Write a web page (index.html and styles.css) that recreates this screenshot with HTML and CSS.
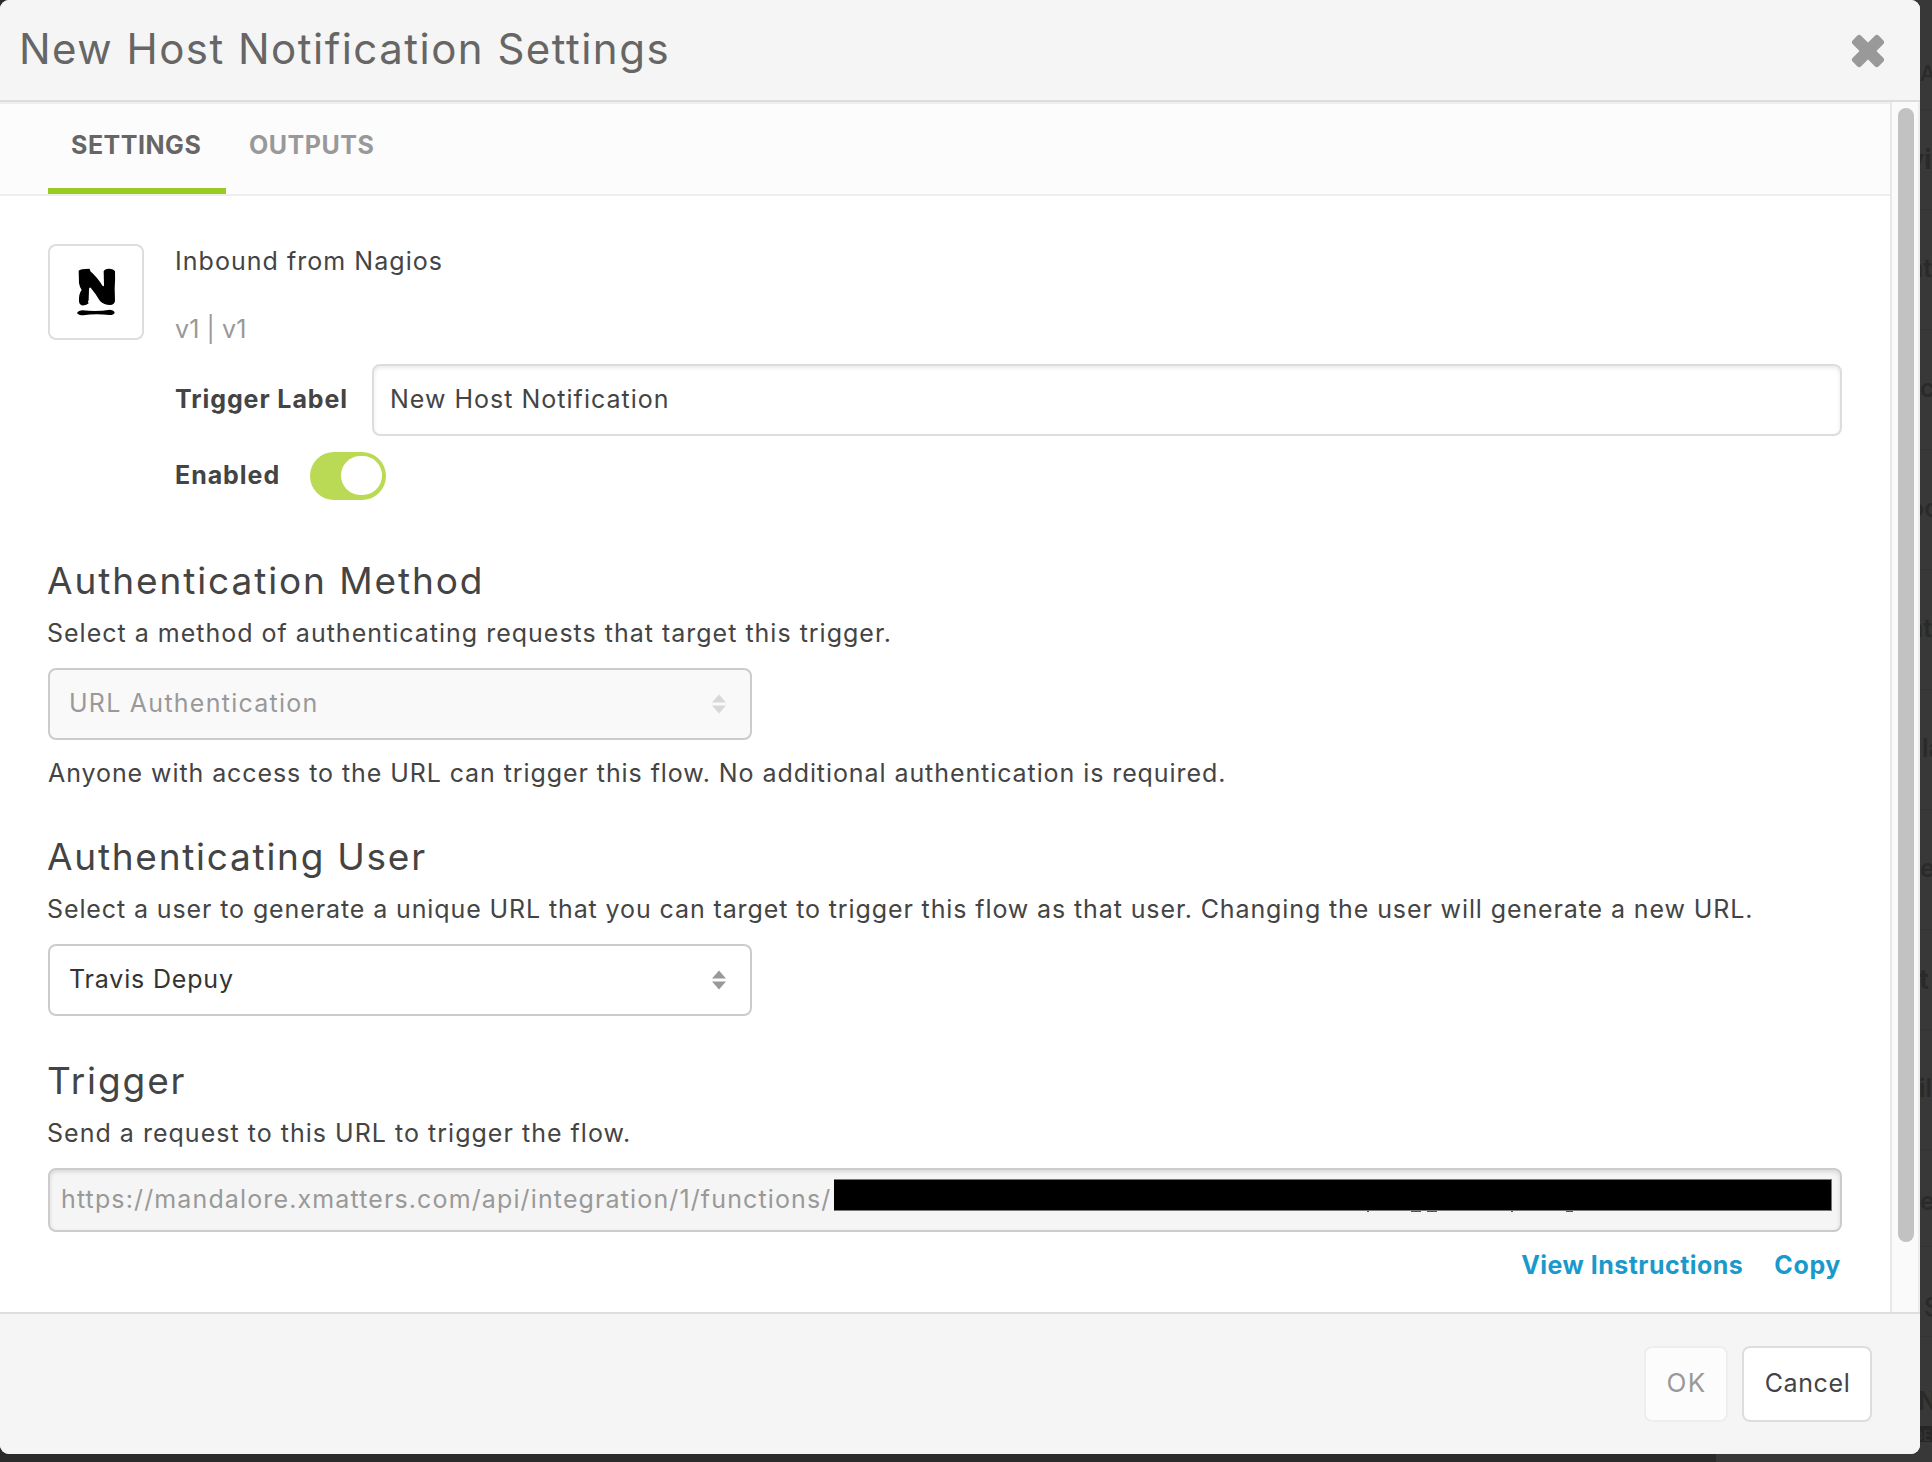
FILE: index.html
```
<!DOCTYPE html>
<html lang="en">
<head>
<meta charset="utf-8">
<title>New Host Notification Settings</title>
<link rel="stylesheet" href="styles.css">
</head>
<body>
<div class="screen">
  <section class="dialog">
    <header class="dialog-header">
      <h1>New Host Notification Settings</h1>
      <svg class="close" viewBox="0 0 32 32" width="32" height="32" fill="#999">
        <rect x="-2.4" y="10.1" width="36.8" height="11.8" rx="2.8" transform="rotate(45 16 16)"/>
        <rect x="-2.4" y="10.1" width="36.8" height="11.8" rx="2.8" transform="rotate(-45 16 16)"/>
      </svg>
    </header>

    <div class="dialog-body">
      <div class="content">
        <nav class="tabs">
          <a class="tab active">SETTINGS</a>
          <a class="tab">OUTPUTS</a>
        </nav>

        <div class="summary">
          <div class="logo">
            <svg viewBox="60 48 276 276" width="92" height="92">
              <path d="M146 122Q150 116 178 116Q181 118 181 124Q200 140 218 168Q222 170 222 165L221 124Q224 116 236 116Q252 117 255 124Q256 150 254 175L255 212Q254 224 240 225Q222 225 210 213Q198 192 182 173Q177 172 177 178L176 210Q172 216 176 220Q170 227 155 226Q148 224 147 215Q146 190 155 180Q150 175 147 160Z"/>
              <path d="M141 249Q146 241 158 241Q200 246 240 239Q253 241 254 248Q252 255 238 255Q195 250 160 256Q145 256 141 249Z"/>
            </svg>
          </div>
          <div class="details">
            <div class="name">Inbound from Nagios</div>
            <div class="version">v1 | v1</div>
            <div class="field label-field">
              <label>Trigger Label</label>
              <div class="input">New Host Notification</div>
            </div>
            <div class="field enabled-field">
              <label>Enabled</label>
              <span class="toggle"><span class="knob"></span></span>
            </div>
          </div>
        </div>

        <section class="group method">
          <h2>Authentication Method</h2>
          <p class="lead">Select a method of authenticating requests that target this trigger.</p>
          <div class="select disabled">
            <span>URL Authentication</span>
            <svg viewBox="0 0 14 20" width="14" height="20"><path d="M7 0.5L14 8.5H0ZM7 19.5L0 11.5H14Z"/></svg>
          </div>
          <p class="note">Anyone with access to the URL can trigger this flow. No additional authentication is required.</p>
        </section>

        <section class="group user">
          <h2>Authenticating User</h2>
          <p class="lead">Select a user to generate a unique URL that you can target to trigger this flow as that user. Changing the user will generate a new URL.</p>
          <div class="select">
            <span>Travis Depuy</span>
            <svg viewBox="0 0 14 20" width="14" height="20"><path d="M7 0.5L14 8.5H0ZM7 19.5L0 11.5H14Z"/></svg>
          </div>
        </section>

        <section class="group trigger">
          <h2>Trigger</h2>
          <p class="lead">Send a request to this URL to trigger the flow.</p>
          <div class="url">
            <span class="url-text">https://mandalore.xmatters.com/api/integration/1/functions/</span>
            <span class="redacted"></span>
          </div>
          <div class="links">
            <a class="view">View Instructions</a>
            <a class="copy">Copy</a>
          </div>
        </section>
      </div>
      <div class="gutter"><div class="thumb"></div></div>
    </div>

    <footer class="dialog-footer">
      <button class="btn ok" disabled>OK</button>
      <button class="btn cancel">Cancel</button>
    </footer>
  </section>

  <aside class="backdrop">
    <div class="row head">A</div>
    <div class="row title">vi</div>
    <div class="row nt">nt</div>
    <div class="row c">c</div>
    <div class="row oc">oc</div>
    <div class="row nt">nt</div>
    <div class="row la">la</div>
    <div class="row">e</div>
    <div class="row title t">t</div>
    <div class="row il">il</div>
    <div class="row short">e</div>
    <div class="row s">S</div>
    <div class="row n">N</div>
    <div class="band">DE</div>
  </aside>
</div>
</body>
</html>
```
FILE: styles.css
```
* { box-sizing: border-box; }

body {
  margin: 0;
  width: 1932px;
  height: 1462px;
  overflow: hidden;
  background: linear-gradient(90deg, #2b2b2b 1716px, #383838 1716px);
  font: 400 25px/30px Inter, "Liberation Sans", sans-serif;
  color: #444;
}

h1, h2, p { margin: 0; font-weight: 400; }

.screen { display: flex; height: 1462px; }

.dialog {
  width: 1920px;
  height: 1454px;
  display: flex;
  flex-direction: column;
  background: #fff;
  border-radius: 9px;
  overflow: hidden;
  flex: none;
}

/* Header */
.dialog-header {
  height: 102px;
  flex: none;
  display: flex;
  justify-content: space-between;
  align-items: center;
  padding: 0 36px 0 19px;
  background: #f5f5f5;
  border-bottom: 2px solid #ddd;
}
.dialog-header h1 {
  font-size: 42px;
  line-height: 50px;
  letter-spacing: 1.48px;
  color: #666;
  padding-bottom: 2px;
}
.close { margin-top: 2px; overflow: visible; }

/* Body */
.dialog-body { display: flex; height: 1210px; flex: none; overflow: hidden; }
.content { width: 1890px; }

.gutter {
  width: 30px;
  padding: 6px 0 0 6px;
  background: #fafafa;
  border-left: 2px solid #e8e8e8;
  border-right: 2px solid #ececec;
}
.thumb { width: 16px; height: 1134px; border-radius: 8px; background: #c2c2c2; }

.tabs {
  display: flex;
  height: 94px;
  padding-left: 48px;
  background: #fcfcfc;
  border-top: 2px solid #eee;
  border-bottom: 2px solid #eee;
}
.tab {
  width: 178px;
  padding: 26px 0 0 23px;
  font-weight: 700;
  letter-spacing: .52px;
  color: #999;
}
.tab.active { color: #666; border-bottom: 6px solid #9c2; }

/* Trigger summary */
.summary { display: flex; gap: 31px; padding: 48px 48px 0; }
.logo { width: 96px; height: 96px; flex: none; border: 2px solid #ddd; border-radius: 8px; }
.logo svg { display: block; }
.details { flex: 1; padding-top: 2px; }
.name { letter-spacing: 1.04px; }
.version { margin-top: 38px; letter-spacing: .1px; color: #999; }

.field { display: flex; align-items: center; }
.field label { font-weight: 700; padding: 0 0 2px; letter-spacing: .92px; }
.label-field { margin-top: 20px; height: 72px; }
.label-field label { width: 197px; }
.enabled-field { margin-top: 16px; height: 48px; }
.enabled-field label { width: 135px; letter-spacing: .95px; }

.input {
  flex: 1;
  height: 72px;
  padding: 18px 0 0 16px;
  border: 2px solid #ddd;
  border-radius: 8px;
  box-shadow: inset 0 2px 4px rgba(0, 0, 0, .09);
  letter-spacing: 1.01px;
}
.toggle {
  width: 76px;
  height: 48px;
  padding: 4px;
  display: flex;
  justify-content: flex-end;
  border-radius: 24px;
  background: #bada55;
}
.knob { width: 41px; height: 39px; border-radius: 20px; background: #fff; }

/* Sections */
.group { padding: 0 48px; }
.group h2 { font-size: 37px; line-height: 44px; letter-spacing: 1.9px; margin-left: -1px; }
.lead { margin: 15px 0 20px; margin-left: -1px; white-space: nowrap; }
.method { margin-top: 59px; }
.method .lead { letter-spacing: 1px; }
.note { margin-top: 18px; letter-spacing: .92px; }
.user { margin-top: 47px; }
.user h2 { letter-spacing: 1.74px; }
.user .lead { letter-spacing: .89px; }
.trigger { margin-top: 43px; }
.trigger .lead { letter-spacing: 1.02px; }

.select {
  width: 704px;
  height: 72px;
  display: flex;
  align-items: center;
  justify-content: space-between;
  padding: 0 24px 0 19px;
  border: 2px solid #ccc;
  border-radius: 8px;
  color: #333;
  letter-spacing: .83px;
}
.select span { padding-bottom: 2px; }
.select svg { fill: #999; }
.select.disabled { background: #f9f9f9; color: #999; letter-spacing: 1.25px; }
.select.disabled svg { fill: #d8d8d8; }

.url {
  height: 64px;
  display: flex;
  padding: 9px 8px 0 11px;
  background: #f5f5f5;
  border: 2px solid #ccc;
  border-radius: 8px;
  box-shadow: inset 0 2px 4px rgba(0, 0, 0, .12);
  color: #999;
}
.url-text { width: 773px; padding-top: 5px; letter-spacing: 1.13px; white-space: nowrap; }
.redacted { position: relative; flex: 1; height: 32px; background: #000; border: 1px solid #777; border-width: 1px 1px 1px 0; }
/* Descenders peeking out below the redaction bar */
.redacted::after {
  content: "";
  position: absolute;
  left: 533px;
  top: 31px;
  width: 206px;
  height: 1px;
  background: linear-gradient(90deg, #555 2px, transparent 2px 44px, #555 44px 54px, transparent 54px 60px, #555 60px 70px, transparent 70px 144px, #555 144px 146px, transparent 146px 199px, #555 199px);
}

.links { display: flex; justify-content: flex-end; gap: 31px; margin-top: 18px; padding-right: 1px; font-weight: 700; color: #1a9acb; }
.view { letter-spacing: .47px; }
.copy { letter-spacing: .62px; }

/* Footer */
.dialog-footer {
  flex: 1;
  display: flex;
  justify-content: flex-end;
  gap: 14px;
  padding: 32px 48px 0 0;
  background: #f5f5f5;
  border-top: 2px solid #ddd;
}
.btn {
  height: 76px;
  padding: 0 0 2px 1px;
  border: 2px solid #ddd;
  border-radius: 8px;
  background: #fff;
  font: inherit;
  color: #444;
}
.ok { width: 84px; background: #fcfcfc; border-color: #eee; color: #999; font-size: 26px; letter-spacing: 1.4px; }
.cancel { width: 130px; letter-spacing: .61px; }

/* Dimmed page behind the dialog */
.backdrop { width: 12px; overflow: hidden; background: #383838; color: #2a2a2a; font-weight: 600; }
.row { height: 120px; padding-top: 43px; border-top: 1px solid #343434; white-space: nowrap; }
.row.head { height: 109px; padding-top: 58px; border-top: 0; font-size: 22px; font-weight: 500; }
.row.title { height: 100px; padding-top: 35px; text-indent: -12px; font-size: 27px; font-weight: 700; }
.row.nt { text-indent: -12px; }
.row.oc { text-indent: -11px; }
.row.la { text-indent: 2px; }
.row.title.t { text-indent: -1px; }
.row.il { text-indent: -1px; }
.row.short { height: 97px; padding-top: 36px; }
.row.s { height: 90px; padding-top: 45px; text-indent: 4px; font-weight: 500; }
.row.n { height: 90px; padding-top: 49px; text-indent: -2px; }
.band { height: 16px; background: #262626; color: #333; font-size: 14px; line-height: 20px; text-indent: -7px; overflow: hidden; }
```
